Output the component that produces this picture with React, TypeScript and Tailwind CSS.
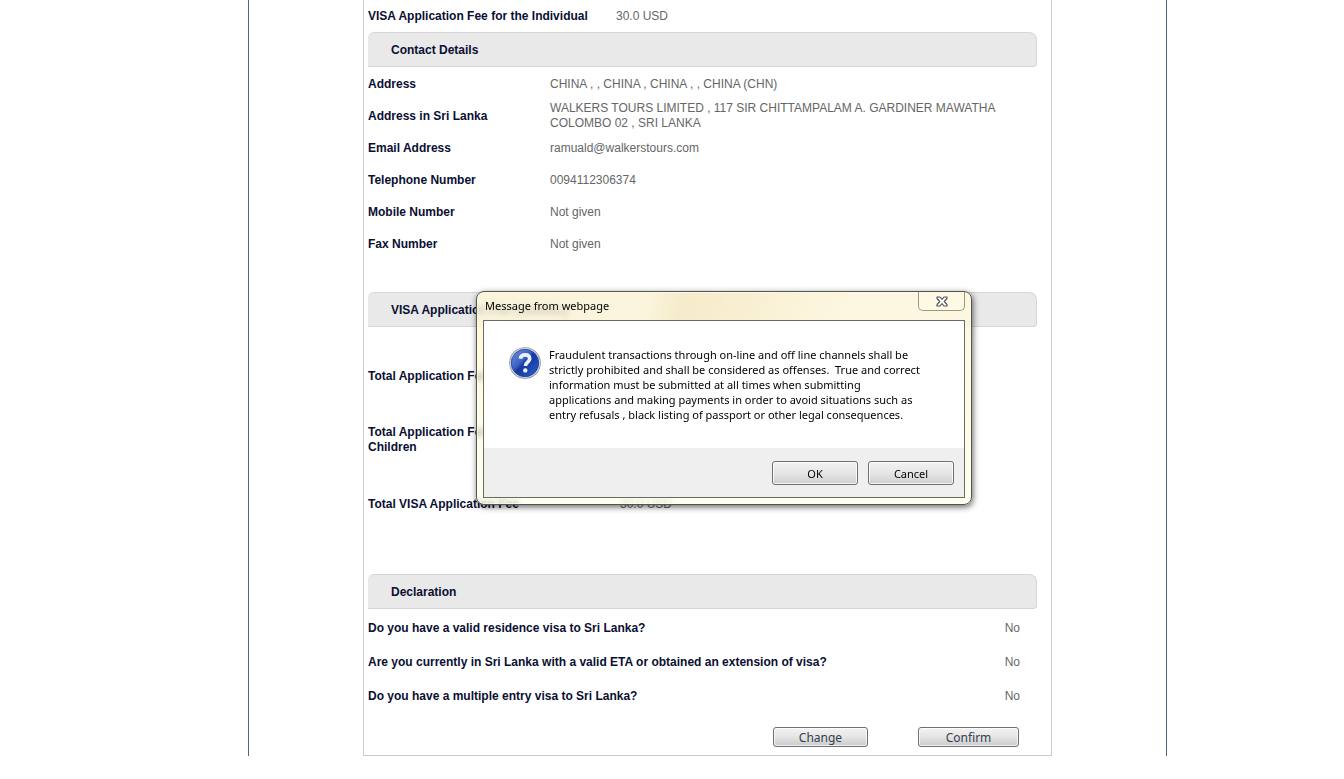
import type { ReactNode } from "react";

const contactDetails = [
  { label: "Address", value: "CHINA , , CHINA , CHINA , , CHINA (CHN)" },
  {
    label: "Address in Sri Lanka",
    value:
      "WALKERS TOURS LIMITED , 117 SIR CHITTAMPALAM A. GARDINER MAWATHA COLOMBO 02 , SRI LANKA",
  },
  { label: "Email Address", value: "ramuald@walkerstours.com" },
  { label: "Telephone Number", value: "0094112306374" },
  { label: "Mobile Number", value: "Not given" },
  { label: "Fax Number", value: "Not given" },
];

const feeSummary = [
  { label: "Total Application Fee", value: "" },
  { label: "Total Application Fee for Children", value: "" },
  { label: "Total VISA Application Fee", value: "30.0 USD" },
];

const declarations = [
  { question: "Do you have a valid residence visa to Sri Lanka?", answer: "No" },
  {
    question:
      "Are you currently in Sri Lanka with a valid ETA or obtained an extension of visa?",
    answer: "No",
  },
  { question: "Do you have a multiple entry visa to Sri Lanka?", answer: "No" },
];

function SectionTitle({ children }: { children: ReactNode }) {
  return (
    <h2 className="flex items-center h-[35px] pt-0.5 pl-[23px] font-bold text-[#0a0f33] bg-[#e9e9e9] border-y border-r border-[#d6d6d6] rounded-tl-md rounded-tr-lg rounded-br-sm">
      {children}
    </h2>
  );
}

function FormButton({ children, width }: { children: ReactNode; width: string }) {
  return (
    <button
      type="button"
      className={`${width} h-5 flex items-center justify-center font-['Noto_Sans',sans-serif] text-[#33404f] border border-[#707070] rounded-[3px] bg-linear-to-b from-[#f3f3f3] from-0% via-[#e4e4e4] via-50% to-[#cbcbcb] to-100% inset-ring inset-ring-white/70`}
    >
      {children}
    </button>
  );
}

function DialogButton({ children }: { children: ReactNode }) {
  return (
    <button
      type="button"
      className="w-[86px] h-6 flex items-center justify-center border border-[#707070] rounded-[3px] bg-linear-to-b from-[#f2f2f2] from-0% via-[#e6e6e6] via-50% to-[#cfcfcf] to-100% inset-ring inset-ring-white/80"
    >
      {children}
    </button>
  );
}

function QuestionIcon() {
  return (
    <svg className="w-8 h-8 shrink-0" viewBox="0 0 32 32" aria-hidden="true">
      <defs>
        <linearGradient id="orb" x1="0" y1="0" x2="1" y2="1">
          <stop offset="0" stopColor="#6f93dc" />
          <stop offset="0.4" stopColor="#3a62c4" />
          <stop offset="0.5" stopColor="#16379f" />
          <stop offset="1" stopColor="#2f63d2" />
        </linearGradient>
      </defs>
      <circle cx="16" cy="16" r="15.8" fill="#8b93a0" />
      <circle cx="16" cy="16" r="15" fill="#dfe4ec" />
      <circle cx="16" cy="16" r="13.8" fill="url(#orb)" stroke="#1c3f93" strokeWidth="0.8" />
      <path
        d="M11.400 11.800C11.700 9 13.500 7.900 16 7.900c2.900 0 4.700 1.500 4.700 3.900 0 3.300-4.300 3.500-4.300 7.200"
        fill="none"
        stroke="#eef1f8"
        strokeWidth="3.700"
      />
      <circle cx="16.300" cy="23.400" r="2.200" fill="#eef1f8" />
    </svg>
  );
}

function CloseIcon() {
  return (
    <svg className="w-3 h-[11px]" viewBox="0 0 12 11" aria-hidden="true">
      <path
        d="M1 1h3l2 2.300L8 1h3v1.500L8.200 5.500 11 8.500V10H8L6 7.700 4 10H1V8.500l2.800-3L1 2.500z"
        fill="#fff"
        stroke="#4d4f57"
        strokeWidth="1.100"
        strokeLinejoin="round"
      />
    </svg>
  );
}

function MessageDialog() {
  return (
    <div
      role="dialog"
      aria-labelledby="dialog-title"
      aria-describedby="dialog-text"
      className="absolute top-[291px] left-[227px] w-[496px] flex flex-col px-1.5 pb-1.5 font-['Noto_Sans',sans-serif] text-[11px] text-black border border-[#55564a] rounded-lg bg-linear-to-b from-[#fff3cc]/70 to-[#fdffe6]/70 backdrop-blur-[3px] inset-ring inset-ring-white/60 shadow-[1px_2px_6px_rgba(0,0,0,0.6)]"
    >
      <div className="absolute inset-x-px top-px h-7 rounded-t-md bg-linear-105 from-[#fff9e6]/30 from-35% via-[#f3e6c0]/60 via-42% to-[#fff9e6]/60 to-75%" />
      <div className="relative flex items-start justify-between h-7">
        <h1 id="dialog-title" className="pt-1.5 pl-0.5">
          Message from webpage
        </h1>
        <button
          type="button"
          aria-label="Close"
          className="w-[47px] h-[19px] flex items-center justify-center border border-t-0 border-[#9c9880] rounded-b-[5px] bg-[#fffbe9]/60"
        >
          <CloseIcon />
        </button>
      </div>
      <div className="relative border border-[#6b6b60] bg-white">
        <div className="flex gap-2 pt-[26px] pb-[26px] pl-[25px] pr-8">
          <QuestionIcon />
          <p id="dialog-text" className="whitespace-pre">
            {`Fraudulent transactions through on-line and off line channels shall be
strictly prohibited and shall be considered as offenses.  True and correct
information must be submitted at all times when submitting
applications and making payments in order to avoid situations such as
entry refusals , black listing of passport or other legal consequences.`}
          </p>
        </div>
        <div className="flex justify-end gap-2.5 pt-[13px] pb-3 pr-2.5 bg-[#efefef]">
          <DialogButton>OK</DialogButton>
          <DialogButton>Cancel</DialogButton>
        </div>
      </div>
    </div>
  );
}

export default function App() {
  return (
    <div className="pl-[71px] bg-white font-['Liberation_Sans',Arial,sans-serif] text-xs leading-[15px] text-[#666666]">
      <div className="relative w-full max-w-[919px] mx-auto pl-[114px] pr-[114px] border-x border-[#55628f]">
        <main className="pl-1 pr-3.5 pb-2 border border-t-0 border-[#cccccc]">
          <dl className="flex items-center h-8">
            <dt className="w-62 font-bold text-[#0a0f33]">
              VISA Application Fee for the Individual
            </dt>
            <dd>30.0 USD</dd>
          </dl>

          <SectionTitle>Contact Details</SectionTitle>
          <dl className="pt-px">
            {contactDetails.map((item) => (
              <div key={item.label} className="flex items-center h-8">
                <dt className="w-[182px] shrink-0 font-bold text-[#0a0f33]">{item.label}</dt>
                <dd className="pr-8">{item.value}</dd>
              </div>
            ))}
          </dl>

          <div className="pt-8">
            <SectionTitle>VISA Application Fee Summary</SectionTitle>
          </div>
          <dl className="pt-[17px]">
            {feeSummary.map((item) => (
              <div key={item.label} className="flex items-center h-16">
                <dt className="w-[252px] pr-24 shrink-0 font-bold text-[#0a0f33]">
                  {item.label}
                </dt>
                <dd>{item.value}</dd>
              </div>
            ))}
          </dl>

          <div className="pt-[38px]">
            <SectionTitle>Declaration</SectionTitle>
          </div>
          <dl className="pt-0.5">
            {declarations.map((item) => (
              <div
                key={item.question}
                className="flex items-center justify-between h-[34px] pr-[17px]"
              >
                <dt className="font-bold text-[#0a0f33]">{item.question}</dt>
                <dd>{item.answer}</dd>
              </div>
            ))}
          </dl>

          <div className="flex justify-end gap-[50px] pt-3.5 pr-[18px]">
            <FormButton width="w-[95px]">Change</FormButton>
            <FormButton width="w-[101px]">Confirm</FormButton>
          </div>
        </main>

        <MessageDialog />
      </div>
    </div>
  );
}
